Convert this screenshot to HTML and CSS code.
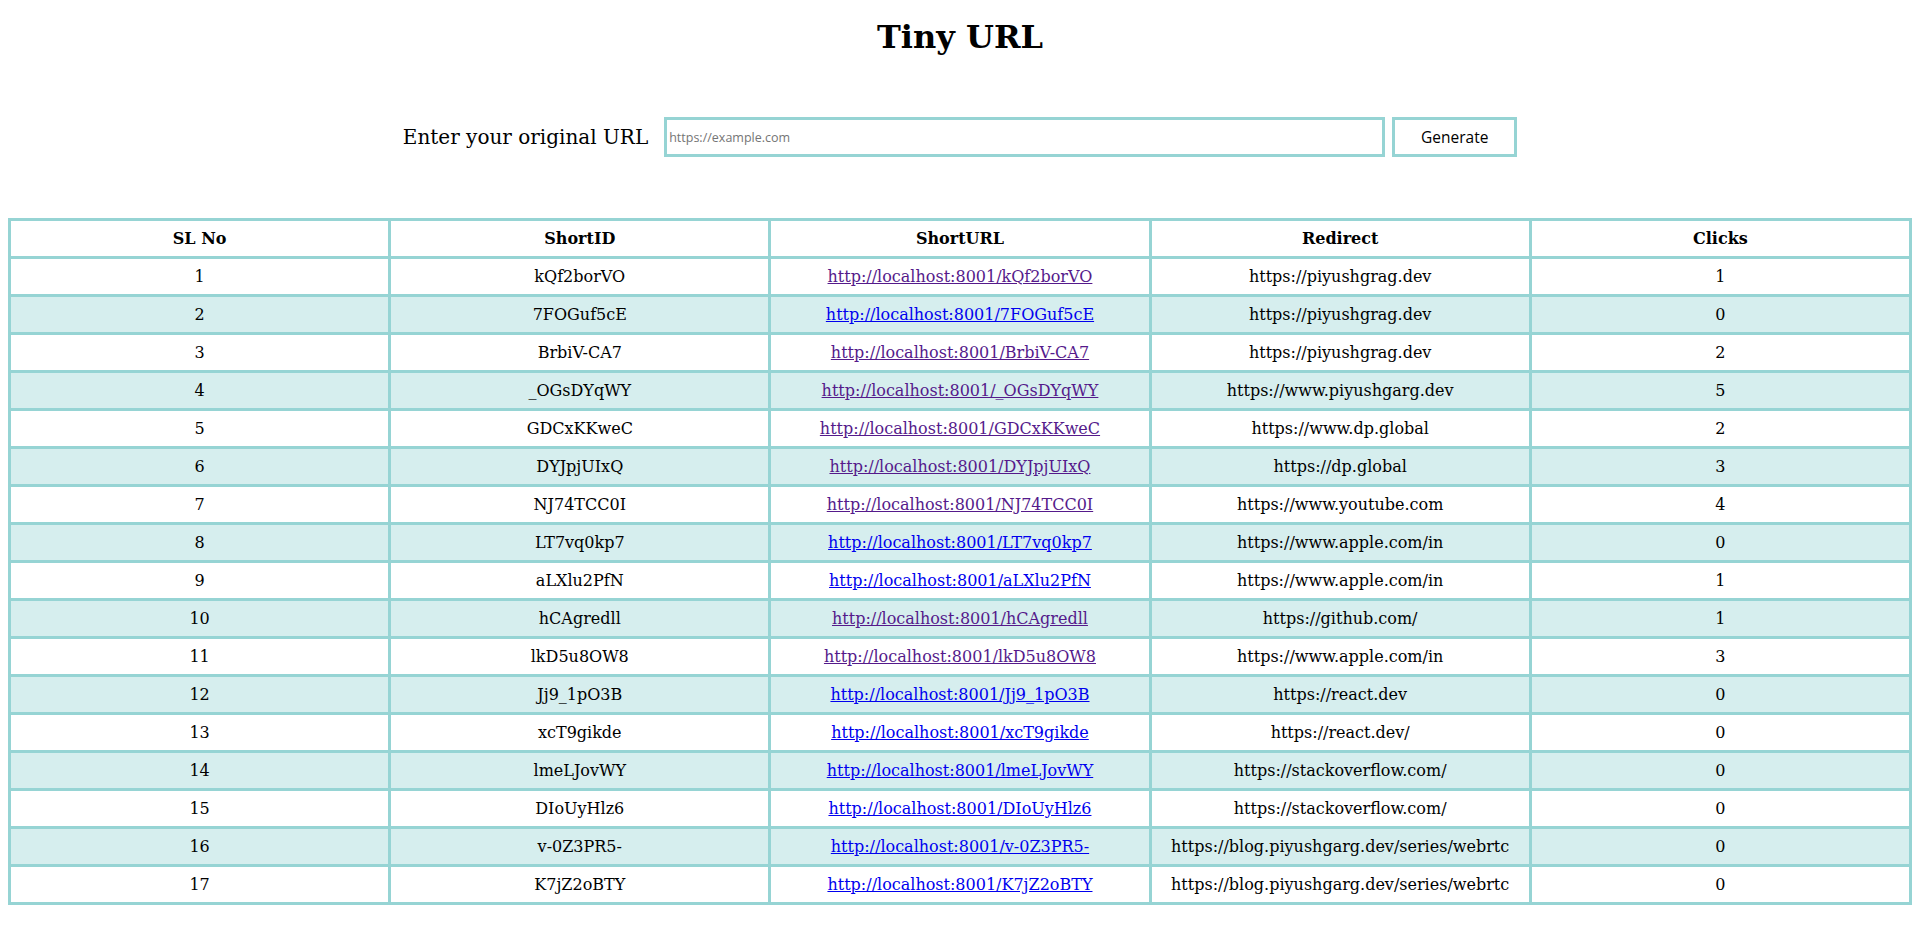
FILE: index.html
```html
<!DOCTYPE html>
<html lang="en">
<head>
<meta charset="utf-8">
<title>Tiny URL</title>
<link rel="stylesheet" href="styles.css">
</head>
<body>
<h1 class="title">Tiny URL</h1>
<form class="url-form">
  <label class="url-label" for="url">Enter your original URL</label>
  <input class="url-input" id="url" type="text" placeholder="https://example.com">
  <button class="gen-btn" type="button">Generate</button>
</form>
<table class="url-table">
  <thead>
    <tr><th>SL No</th><th>ShortID</th><th>ShortURL</th><th>Redirect</th><th>Clicks</th></tr>
  </thead>
  <tbody>
    <tr><td>1</td><td>kQf2borVO</td><td><a class="visited" href="#">http://localhost:8001/kQf2borVO</a></td><td>https://piyushgrag.dev</td><td>1</td></tr>
    <tr><td>2</td><td>7FOGuf5cE</td><td><a class="link" href="#">http://localhost:8001/7FOGuf5cE</a></td><td>https://piyushgrag.dev</td><td>0</td></tr>
    <tr><td>3</td><td>BrbiV-CA7</td><td><a class="visited" href="#">http://localhost:8001/BrbiV-CA7</a></td><td>https://piyushgrag.dev</td><td>2</td></tr>
    <tr><td>4</td><td>_OGsDYqWY</td><td><a class="visited" href="#">http://localhost:8001/_OGsDYqWY</a></td><td>https://www.piyushgarg.dev</td><td>5</td></tr>
    <tr><td>5</td><td>GDCxKKweC</td><td><a class="visited" href="#">http://localhost:8001/GDCxKKweC</a></td><td>https://www.dp.global</td><td>2</td></tr>
    <tr><td>6</td><td>DYJpjUIxQ</td><td><a class="visited" href="#">http://localhost:8001/DYJpjUIxQ</a></td><td>https://dp.global</td><td>3</td></tr>
    <tr><td>7</td><td>NJ74TCC0I</td><td><a class="visited" href="#">http://localhost:8001/NJ74TCC0I</a></td><td>https://www.youtube.com</td><td>4</td></tr>
    <tr><td>8</td><td>LT7vq0kp7</td><td><a class="link" href="#">http://localhost:8001/LT7vq0kp7</a></td><td>https://www.apple.com/in</td><td>0</td></tr>
    <tr><td>9</td><td>aLXlu2PfN</td><td><a class="link" href="#">http://localhost:8001/aLXlu2PfN</a></td><td>https://www.apple.com/in</td><td>1</td></tr>
    <tr><td>10</td><td>hCAgredll</td><td><a class="visited" href="#">http://localhost:8001/hCAgredll</a></td><td>https://github.com/</td><td>1</td></tr>
    <tr><td>11</td><td>lkD5u8OW8</td><td><a class="visited" href="#">http://localhost:8001/lkD5u8OW8</a></td><td>https://www.apple.com/in</td><td>3</td></tr>
    <tr><td>12</td><td>Jj9_1pO3B</td><td><a class="link" href="#">http://localhost:8001/Jj9_1pO3B</a></td><td>https://react.dev</td><td>0</td></tr>
    <tr><td>13</td><td>xcT9gikde</td><td><a class="link" href="#">http://localhost:8001/xcT9gikde</a></td><td>https://react.dev/</td><td>0</td></tr>
    <tr><td>14</td><td>lmeLJovWY</td><td><a class="link" href="#">http://localhost:8001/lmeLJovWY</a></td><td>https://stackoverflow.com/</td><td>0</td></tr>
    <tr><td>15</td><td>DIoUyHlz6</td><td><a class="link" href="#">http://localhost:8001/DIoUyHlz6</a></td><td>https://stackoverflow.com/</td><td>0</td></tr>
    <tr><td>16</td><td>v-0Z3PR5-</td><td><a class="link" href="#">http://localhost:8001/v-0Z3PR5-</a></td><td>https://blog.piyushgarg.dev/series/webrtc</td><td>0</td></tr>
    <tr><td>17</td><td>K7jZ2oBTY</td><td><a class="link" href="#">http://localhost:8001/K7jZ2oBTY</a></td><td>https://blog.piyushgarg.dev/series/webrtc</td><td>0</td></tr>
  </tbody>
</table>
</body>
</html>
```
FILE: styles.css
```css
html, body {
  background: #ffffff;
}
body {
  margin: 8px;
  font-family: "DejaVu Serif", serif;
  font-size: 16px;
  color: #000000;
}
.title {
  margin: 11px 0 0;
  font-size: 32px;
  font-weight: bold;
  text-align: center;
  line-height: 37px;
}
.url-form {
  margin-top: 61px;
  display: flex;
  justify-content: center;
  align-items: center;
  height: 40px;
}
.url-label {
  font-size: 20px;
  margin-right: 16px;
}
.url-input {
  box-sizing: border-box;
  width: 721px;
  height: 40px;
  border: 3px solid #96d4d4;
  padding: 1px 2px;
  font-family: "Open Sans", sans-serif;
  font-size: 12.5px;
  color: #000;
  outline: none;
  margin: 0;
}
.url-input::placeholder {
  color: #757575;
}
.gen-btn {
  box-sizing: border-box;
  width: 125px;
  height: 40px;
  margin: 0 0 0 7px;
  border: 3px solid #96d4d4;
  background: #ffffff;
  font-family: "Open Sans", sans-serif;
  font-size: 15.5px;
  color: #000;
  padding: 0;
}
.url-table {
  margin-top: 61px;
  width: 100%;
  table-layout: fixed;
  border-collapse: collapse;
  border: 3px solid #96d4d4;
}
.url-table th,
.url-table td {
  border: 3px solid #96d4d4;
  padding: 8px;
  text-align: center;
  line-height: 19px;
}
.url-table tbody tr:nth-child(even) {
  background-color: #d6eeee;
}
.link {
  color: #0000ee;
}
.visited {
  color: #551a8b;
}
```
